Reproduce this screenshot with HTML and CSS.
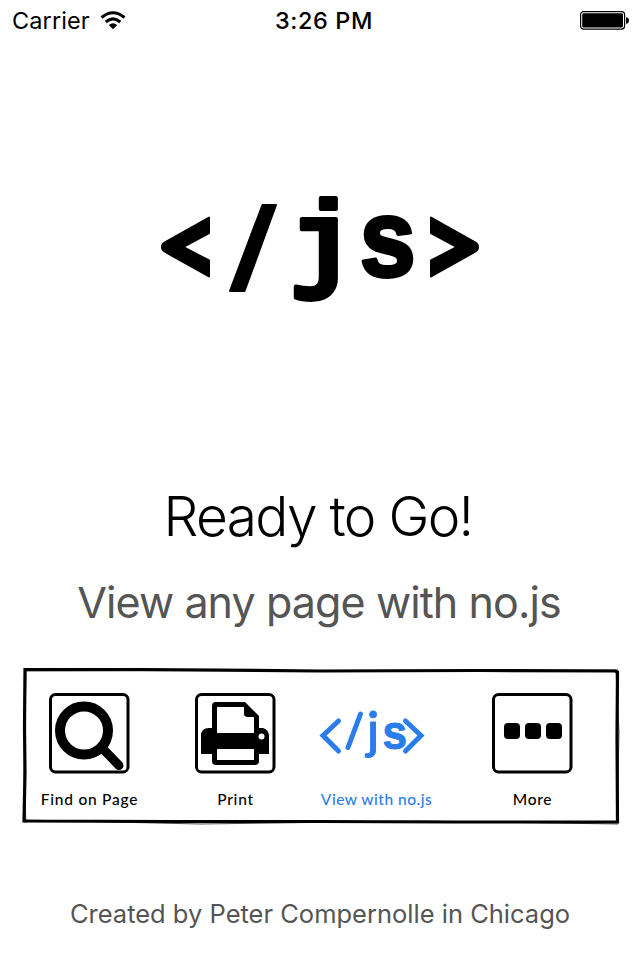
FILE: index.html
```html
<!DOCTYPE html>
<html lang="en">
<head>
<meta charset="utf-8">
<title>no.js</title>
<link rel="stylesheet" href="styles.css">
</head>
<body>
<header class="status">
  <div class="carrier"><span>Carrier</span>
    <svg class="wifi" viewBox="0 0 26 20"><path class="arc" d="M1.5 7.5Q13 -2 24.5 7.5M5.700 12Q13 5.800 20.300 12"/><path d="M8.800 15Q13 11.500 17.200 15L13 19.300Z"/></svg>
  </div>
  <time class="clock">3:26 PM</time>
  <svg class="battery" viewBox="0 0 50 20"><rect class="shell" x=".6" y="1.600" width="44" height="17.500" rx="3"/><rect x="2.200" y="3.200" width="40.800" height="14.300" rx="1.500"/><path d="M46 7.200Q49 7.500 49 10.400T46 13.800Z"/></svg>
</header>
<main class="content">
  <svg class="logo" viewBox="0 0 320 140">
    <path class="mark" d="M49 39.500V55L23 69L49 82.500V98.500L4.500 73.500Q2 72 2 69T4.500 64.500ZM102.500 27H116L84.500 113H70ZM271 39.500L315.500 64.500Q318 66 318 69T315.500 73.500L271 98.500V82.500L297 69L271 55Z"/>
    <text class="letters" x="129.500" y="98" transform="translate(0 1)">j</text>
    <text class="letters" transform="translate(197.500 98) scale(.91 1)">s</text>
  </svg>
  <h1 class="title">Ready to Go!</h1>
  <p class="subtitle">View any page with no.js</p>
  <section class="actions">
    <svg class="frame" viewBox="0 0 600 160"><path d="M5 2.500L120 2.500L300 4L460 3.500L595 4L597.500 5L597 70L597.500 155L430 155L300 154.500L150 154.500L4 154L5 105L4.500 60Z"/><path class="sketch" d="M4 4L598 3M6 3L4 110L6 156M596 4L599 65L597 156M5 153L180 157L400 154L598 157"/></svg>
    <div class="action find">
      <svg class="icon" viewBox="0 0 82 82"><rect class="box" x="1.500" y="2.500" width="77.500" height="77.500" rx="5"/><circle class="lens" cx="35" cy="38.500" r="24"/><path class="handle" d="M55 58L70 73.500"/></svg>
      <span class="label">Find on Page</span>
    </div>
    <div class="action print">
      <svg class="icon" viewBox="0 0 82 82"><rect class="box" x="1.500" y="2.500" width="77.500" height="77.500" rx="5"/><path d="M17 14Q17 10 21 10H50L64 24V36H68Q74 38 74 44V62H64V69Q64 73 60 73H21Q17 73 17 69V62H6V44Q6 36 14 36H17Z"/><path class="paper" d="M22 15H49V22Q49 25 53 25H59V41H22ZM22 57H59V68H22Z"/><circle class="paper" cx="66.500" cy="44.500" r="3"/></svg>
      <span class="label">Print</span>
    </div>
    <div class="action view">
      <svg class="icon code" viewBox="0 0 112 82"><path class="stroke" d="M17.500 29L2 43.500L17.500 59M39.500 22L27 55.500M84.500 29L100 43.500L84.500 59"/><text class="j" x="46" y="56">j</text><text class="s" transform="translate(61.500 57) scale(.92 1)">s</text></svg>
      <span class="label">View with no.js</span>
    </div>
    <div class="action more">
      <svg class="icon" viewBox="0 0 82 82"><rect class="box" x="1.500" y="2.500" width="77.500" height="77.500" rx="5"/><rect x="12" y="31" width="16" height="16" rx="4"/><rect x="33" y="31" width="16" height="16" rx="4"/><rect x="54" y="31" width="16" height="16" rx="4"/></svg>
      <span class="label">More</span>
    </div>
  </section>
</main>
<footer class="credit">Created by Peter Compernolle in Chicago</footer>
</body>
</html>
```
FILE: styles.css
```css
* { box-sizing: border-box; }
body { margin: 0; width: 640px; height: 960px; overflow: hidden; background: #fff; color: #000; font-family: Inter, "Liberation Sans", sans-serif; display: flex; flex-direction: column; }
svg { display: block; overflow: visible; }
.status { height: 40px; padding: 0 10px 0 12px; display: grid; grid-template-columns: 1fr auto 1fr; align-items: center; font-size: 23.5px; }
.carrier { display: flex; align-items: center; gap: 10px; letter-spacing: .1px; }
.wifi { width: 26px; height: 20px; }
.arc { fill: none; stroke: #000; stroke-width: 3; }
.clock { font-weight: 500; letter-spacing: .6px; padding-left: 6px; }
.battery { width: 50px; height: 20px; justify-self: end; }
.shell { fill: none; stroke: #000; stroke-width: 1.2; }
.content { display: flex; flex-direction: column; align-items: center; }
.logo { margin-top: 138px; width: 320px; height: 140px; }
.mark { stroke: #000; stroke-width: 2; stroke-linejoin: round; }
.letters { font: bold 110px "Liberation Mono", monospace; stroke: #000; stroke-width: 4px; stroke-linejoin: round; }
.title { margin: 163px 4px 0 0; font-size: 55px; line-height: 70px; font-weight: 300; letter-spacing: -1.7px; white-space: nowrap; }
.subtitle { margin: 21px 2px 0 0; font-size: 43px; line-height: 60px; color: #555; letter-spacing: -.9px; white-space: nowrap; }
.actions { position: relative; width: 600px; height: 160px; margin-top: 35px; margin-left: 2px; padding-top: 25px; display: grid; grid-template-columns: 137px 155px 127px 185px; }
.frame { position: absolute; top: 0; left: -1px; width: 600px; height: 160px; fill: none; stroke: #000; stroke-width: 3.2; }
.sketch { stroke-width: 1; opacity: .7; }
.action { display: flex; flex-direction: column; align-items: center; }
.icon { width: 82px; height: 82px; }
.code { width: 112px; }
.box { fill: none; stroke: #000; stroke-width: 3; }
.lens { fill: none; stroke: #000; stroke-width: 10; }
.handle { stroke: #000; stroke-width: 9; stroke-linecap: round; }
.paper { fill: #fff; }
.label { margin-top: 15px; font: 500 15.5px/20px Lato, sans-serif; letter-spacing: .75px; white-space: nowrap; }
.view { color: #2b7de9; }
.view .label { letter-spacing: .5px; }
.stroke { fill: none; stroke: #2b7de9; stroke-width: 5; stroke-linecap: round; }
.j, .s { fill: #2b7de9; stroke: #2b7de9; stroke-width: 1px; stroke-linejoin: round; }
.j { font: 500 50px Lato, sans-serif; }
.s { font: bold 48px "Liberation Sans", sans-serif; }
.credit { margin-top: 69px; text-align: center; font-size: 25.5px; line-height: 36px; color: #555; white-space: nowrap; }
```
